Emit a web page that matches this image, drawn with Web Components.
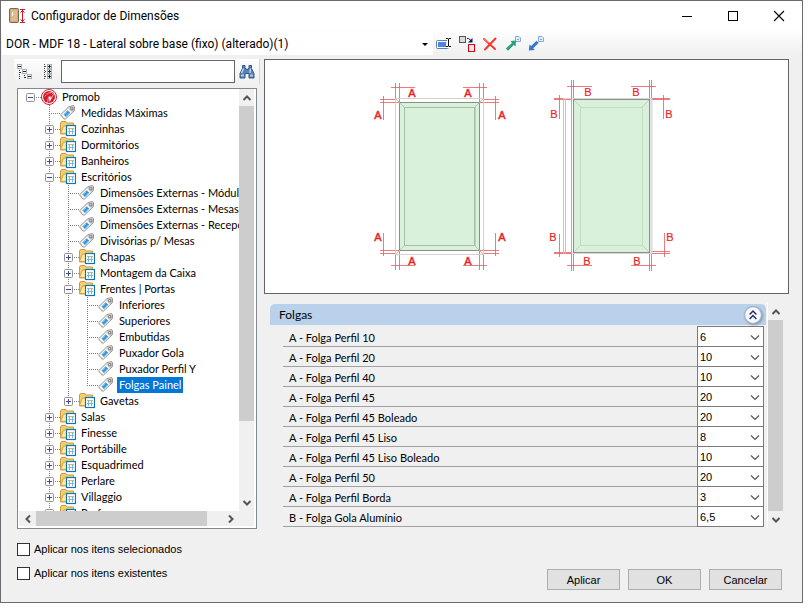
<!DOCTYPE html>
<html lang="pt-BR">
<head>
<meta charset="utf-8">
<title>Configurador de Dimensões</title>
<style>
	html{
		--face: #f0f0f0;
		--frame: #6b6b6f;
		--thumb: #cdcdcd;
		--ui-font: "Liberation Sans", Arial, sans-serif;
		--caption-font: Roboto, "Segoe UI", sans-serif;
		--tree-font: Lato, "Liberation Sans", sans-serif;
	}
	body{
		margin: 0;
		background: #fff;
		color: #000;
		font: 11px/16px var(--ui-font);
	}
</style>
</head>
<body>

<config-dialog caption="Configurador de Dimensões">
	<tool-strip slot="tools" value="DOR - MDF 18 - Lateral sobre base (fixo) (alterado)(1)"></tool-strip>
	<search-strip slot="search"></search-strip>
	<tree-view slot="tree">
		<tree-item label="Promob" icon="promob" state="open" root last>
			<tree-item label="Medidas Máximas" icon="tag"></tree-item>
			<tree-item label="Cozinhas" icon="folder" state="closed"></tree-item>
			<tree-item label="Dormitórios" icon="folder" state="closed"></tree-item>
			<tree-item label="Banheiros" icon="folder" state="closed"></tree-item>
			<tree-item label="Escritórios" icon="folder" state="open">
				<tree-item label="Dimensões Externas - Módulos" icon="tag"></tree-item>
				<tree-item label="Dimensões Externas - Mesas" icon="tag"></tree-item>
				<tree-item label="Dimensões Externas - Recepção" icon="tag"></tree-item>
				<tree-item label="Divisórias p/ Mesas" icon="tag"></tree-item>
				<tree-item label="Chapas" icon="folder" state="closed"></tree-item>
				<tree-item label="Montagem da Caixa" icon="folder" state="closed"></tree-item>
				<tree-item label="Frentes | Portas" icon="folder" state="open">
					<tree-item label="Inferiores" icon="tag"></tree-item>
					<tree-item label="Superiores" icon="tag"></tree-item>
					<tree-item label="Embutidas" icon="tag"></tree-item>
					<tree-item label="Puxador Gola" icon="tag"></tree-item>
					<tree-item label="Puxador Perfil Y" icon="tag"></tree-item>
					<tree-item label="Folgas Painel" icon="tag" selected last></tree-item>
				</tree-item>
				<tree-item label="Gavetas" icon="folder" state="closed" last></tree-item>
			</tree-item>
			<tree-item label="Salas" icon="folder" state="closed"></tree-item>
			<tree-item label="Finesse" icon="folder" state="closed"></tree-item>
			<tree-item label="Portábille" icon="folder" state="closed"></tree-item>
			<tree-item label="Esquadrimed" icon="folder" state="closed"></tree-item>
			<tree-item label="Perlare" icon="folder" state="closed"></tree-item>
			<tree-item label="Villaggio" icon="folder" state="closed"></tree-item>
			<tree-item label="Performa" icon="folder" state="closed"></tree-item>
		</tree-item>
	</tree-view>
	<door-preview slot="detail"></door-preview>
	<value-panel slot="detail" heading="Folgas">
		<value-row label="A - Folga Perfil 10" value="6"></value-row>
		<value-row label="A - Folga Perfil 20" value="10"></value-row>
		<value-row label="A - Folga Perfil 40" value="10"></value-row>
		<value-row label="A - Folga Perfil 45" value="20"></value-row>
		<value-row label="A - Folga Perfil 45 Boleado" value="20"></value-row>
		<value-row label="A - Folga Perfil 45 Liso" value="8"></value-row>
		<value-row label="A - Folga Perfil 45 Liso Boleado" value="10"></value-row>
		<value-row label="A - Folga Perfil 50" value="20"></value-row>
		<value-row label="A - Folga Perfil Borda" value="3"></value-row>
		<value-row label="B - Folga Gola Alumínio" value="6,5"></value-row>
	</value-panel>
	<check-option slot="options">Aplicar nos itens selecionados</check-option>
	<check-option slot="options">Aplicar nos itens existentes</check-option>
	<push-button slot="actions">Aplicar</push-button>
	<push-button slot="actions">OK</push-button>
	<push-button slot="actions">Cancelar</push-button>
</config-dialog>

<script>
const icons = {
	door: `
		<rect x=".5" y=".5" width="9" height="14" rx="1" fill="#cba97a" stroke="#80664a"/>
		<path d="M2 2h6v11H2z" fill="#d9bd93"/><path d="M3.500 4v4" stroke="#fff"/>
		<path d="M11 1.500h5M11 14.500h5M13.500 2v12M11.500 4.500l2-2 2 2M11.500 11.500l2 2 2-2" fill="none" stroke="#d8142c"/>`,
	promob: `
		<circle cx="8" cy="8" r="7.500" fill="#fff" stroke="#d31f2f"/>
		<circle cx="8" cy="8" r="6" fill="#d31f2f"/>
		<path d="M6.500 14l1-6 2-.5 1.500 1 1.500-3-2-2-3 .5-2 1.500-2 2" fill="none" stroke="#f0a0a6"/>
		<path d="M8 8l3 .8-2.500 4.200z" fill="#fff"/>`,
	tag: `
		<path d="M.5 9.800L8.800 1.800 13.500.5l1 1v4L5.500 14h-1.500z" fill="#f6f6f6" stroke="#909090"/>
		<path d="M9.500 2.200l4-1.200.600.600v3.600l-2 2-4-4z" fill="#c6c6c6"/>
		<path d="M3.500 9.500l4.200-4.200 2.500 2.500L6 12z" fill="#2f95dc"/>
		<path d="M4.500 9.500l3-3M6.500 11l3-3" stroke="#8fd0ff" stroke-width=".8"/>
		<rect x="10.800" y="2.800" width="2" height="2" fill="#fff" stroke="#6f6f6f" stroke-width=".8"/>`,
	folder: `
		<path d="M.5 13v-11l1-1.500h4.500l1 1.500h6.500v11z" fill="#f3cf74" stroke="#cf9a3c"/>
		<path d="M.5 12.500l3-7.500h11v7.500z" fill="#ffe9a6" stroke="#d9a23f"/>
		<rect x="6.500" y="4.500" width="9" height="10" fill="#fff" stroke="#0a78b4" stroke-width="1.200"/>
		<path d="M8 7.500h6" stroke="#e6b84c"/>
		<path d="M8 10.500h6M9.500 7v6M12.500 7v6" stroke="#7ab6e8"/>`,
	expandTree: `
		<path d="M2.500 6v9M7.500 11v4" fill="none" stroke="#333" stroke-dasharray="1 1"/>
		<path d="M3 8.500h2M8 13.500h2" fill="none" stroke="#333" stroke-dasharray="1 1"/>
		<g fill="#fff" stroke="#a3adb8"><rect x=".5" y=".5" width="4" height="4"/><rect x="5.500" y="5.500" width="4" height="4"/><rect x="10.500" y="10.500" width="4" height="4"/></g>
		<path d="M1 2.500h3M6 7.500h3M11 12.500h3" stroke="#222"/>`,
	collapseTree: `
		<path d="M5.500 0v16" stroke="#444" stroke-dasharray="1 1"/>
		<g fill="#fff" stroke="#a3adb8"><rect x="8.500" y=".5" width="4" height="4"/><rect x="8.500" y="5.500" width="4" height="4"/><rect x="8.500" y="10.500" width="4" height="4"/></g>
		<path d="M9 2.500h3M10.500 1v3M9 7.500h3M10.500 6v3M9 12.500h3M10.500 11v3" stroke="#222"/>
		<path d="M6 2.500h2M6 7.500h2M6 12.500h2" stroke="#444" stroke-dasharray="1 1"/>`,
	find: `
		<path d="M3.500 1.500h2.500v3h1v1h2v-1h1v-3h2.500v3l2.500 5v4.500h-5V9.500H6v4.500H1V9.500l2.500-5z" fill="#5a83b8" stroke="#34588a"/>
		<path d="M4.500 4.500l-2 4.500M11.500 4.500l-.5 4.500" stroke="#c6dcf4" stroke-width="1.300"/>
		<path d="M2 11.500h3M11 11.500h3" stroke="#a9c6e8" stroke-width="2"/>`,
	rename: `
		<rect x=".5" y="4.500" width="12" height="8" rx="1" fill="#fff" stroke="#5f7fae"/>
		<rect x="2" y="6" width="8" height="5" fill="#4a86e0"/>
		<path d="M10 2.500h5M10 10.500h5M12.500 3v7" stroke="#fff" stroke-width="3"/>
		<path d="M10 2.500h2l.5.500.5-.5h2M10 10.500h2l.5-.5.5.5h2M12.500 3v7" fill="none" stroke="#111"/>`,
	replace: `
		<rect x=".5" y=".5" width="6" height="6" fill="#dcdcdc" stroke="#555"/>
		<rect x="9.500" y="8.500" width="6" height="7" fill="#e8e8e8" stroke="#e0000f"/>
		<path d="M8 2.500h1.500l2.500 2" fill="none" stroke="#0a1a6a"/><path d="M13.500 2v4.500H9z" fill="#0a1a6a"/>`,
	remove: `
		<path d="M2 3l11 10M13.500 2.500L3 13.500" stroke="#f03a30" stroke-width="2" stroke-linecap="round"/>
		<path d="M1.500 2.500l5 4" stroke="#ff8b80"/>`,
	exportGreen: `
		<path d="M10.500.5h3.500l1.500 1.500v3.500h-5z" fill="#e4effb" stroke="#86a9da"/><path d="M12 3.500h2" stroke="#7fa2d8"/>
		<path d="M11 4.500l-5.500.5 1.500 2L.8 12.500l2.200 2.200L8.800 9l1.700 1.500z" fill="#27a17c"/>`,
	importBlue: `
		<path d="M10.500.5h3.500l1.500 1.500v3.500h-5z" fill="#e4effb" stroke="#86a9da"/><path d="M12 3.500h2" stroke="#7fa2d8"/>
		<path d="M.8 14.500l.7-6 1.700 1.500L8.500 4.700l2.200 2.200L5.200 12.200l1.600 1.700z" fill="#3479cd"/>`,
	up: `<path d="M4.500 10L8 6.500l3.500 3.500" fill="none" stroke="#555" stroke-width="2"/>`,
	down: `<path d="M4.500 6L8 9.500l3.500-3.500" fill="none" stroke="#555" stroke-width="2"/>`,
	left: `<path d="M10 4.500L6.500 8l3.500 3.500" fill="none" stroke="#555" stroke-width="2"/>`,
	right: `<path d="M6 4.500L9.500 8 6 11.500" fill="none" stroke="#555" stroke-width="2"/>`,
	chevron: `<path d="M4 6.500l4 4 4-4" fill="none" stroke="#555" stroke-width="1.200"/>`,
	triangle: `<path d="M5 7h6l-3 3z" fill="#000"/>`,
	minimize: `<path d="M3 8.500h10" stroke="#000"/>`,
	maximize: `<rect x="3.500" y="3.500" width="9" height="9" fill="none" stroke="#000"/>`,
	close: `<path d="M3 3l10 10M13 3L3 13" stroke="#000" stroke-width="1.100"/>`,
	collapse: `
		<circle cx="8" cy="8" r="7.500" fill="#f7f8fc" stroke="#a4aec4"/>
		<path d="M5 7.500l3-3 3 3M5 11.500l3-3 3 3" fill="none" stroke="#1c2f6e" stroke-width="1.300"/>`
};

const svg = (name) => `<svg width="16" height="16" viewBox="0 0 16 16" aria-hidden="true">${icons[name]}</svg>`;

class BaseElement extends HTMLElement {
	render(html){
		const template = document.createElement('template');
		template.innerHTML = html;
		this.attachShadow({ mode: 'open'});
		this.shadowRoot.appendChild(template.content.cloneNode(true));
	}
}

class ConfigDialog extends BaseElement {
	constructor(){
		super();
		this.render(`
		<style>
			:host{
				display: flex;
				flex-direction: column;
				box-sizing: border-box;
				height: calc(100vh - 7px);
				margin-right: 9px;
				border: 1px solid var(--frame);
				background: var(--face);
			}
			header{
				display: flex;
				align-items: center;
				height: 30px;
				padding-left: 8px;
				background: #fff;
				font: 12px/16px var(--caption-font);
			}
			h1{
				flex: 1;
				margin: 0 0 0 6px;
				font: inherit;
			}
			header svg{
				display: block;
			}
			header button{
				display: grid;
				place-items: center;
				width: 46px;
				height: 29px;
				padding: 0;
				border: 0;
				background: none;
			}
			main{
				flex: 1;
				display: grid;
				grid-template-columns: 243px 1fr;
				gap: 7px;
				min-height: 0;
				padding: 3px 13px 0;
			}
			.side, .detail{
				display: flex;
				flex-direction: column;
				min-height: 0;
			}
			.side{
				gap: 4px;
			}
			.detail{
				gap: 9px;
			}
			footer{
				display: flex;
				justify-content: space-between;
				padding: 14px 20px 12px 16px;
			}
			.options{
				display: flex;
				flex-direction: column;
				gap: 8px;
			}
			.actions{
				display: flex;
				align-items: flex-end;
				gap: 8px;
				padding-top: 26px;
			}
		</style>
		<header>
			${svg('door')}
			<h1></h1>
			<button aria-label="Minimizar">${svg('minimize')}</button>
			<button aria-label="Maximizar">${svg('maximize')}</button>
			<button aria-label="Fechar">${svg('close')}</button>
		</header>
		<slot name="tools"></slot>
		<main>
			<div class="side"><slot name="search"></slot><slot name="tree"></slot></div>
			<div class="detail"><slot name="detail"></slot></div>
		</main>
		<footer>
			<div class="options"><slot name="options"></slot></div>
			<div class="actions"><slot name="actions"></slot></div>
		</footer>`);
		this.shadowRoot.querySelector('h1').textContent = this.getAttribute('caption');
	}
}

class ToolStrip extends BaseElement {
	constructor(){
		super();
		this.render(`
		<style>
			:host{
				display: flex;
				align-items: center;
				height: 25px;
				padding-left: 1px;
				background: linear-gradient(#fdfdfd, var(--face));
			}
			.combo{
				display: grid;
				grid-template-columns: 1fr 16px;
				align-items: center;
				width: 431px;
				height: 23px;
				background: #fff;
			}
			select{
				grid-area: 1 / 1 / 2 / 3;
				height: 23px;
				padding: 0 0 0 4px;
				border: 0;
				background: none;
				color: #000;
				font: 12px/16px var(--caption-font);
				appearance: none;
			}
			.combo svg{
				grid-area: 1 / 2;
				pointer-events: none;
			}
			svg{
				display: block;
			}
			button{
				width: 23px;
				height: 22px;
				padding: 0 3px;
				border: 0;
				background: none;
			}
		</style>
		<div class="combo">
			<select aria-label="Configuração"><option></option></select>
			${svg('triangle')}
		</div>
		<button aria-label="Renomear">${svg('rename')}</button>
		<button aria-label="Substituir">${svg('replace')}</button>
		<button aria-label="Excluir">${svg('remove')}</button>
		<button aria-label="Exportar">${svg('exportGreen')}</button>
		<button aria-label="Importar">${svg('importBlue')}</button>`);
		this.shadowRoot.querySelector('option').textContent = this.getAttribute('value');
	}
}

class SearchStrip extends BaseElement {
	constructor(){
		super();
		this.render(`
		<style>
			:host{
				display: flex;
				align-items: center;
				height: 25px;
				margin-right: -3px;
				border-right: 1px solid #d4d4d4;
				background: linear-gradient(#fdfdfd, var(--face));
			}
			button{
				width: 22px;
				padding: 0;
				border: 0;
				background: none;
			}
			svg{
				display: block;
				margin: 0 auto;
			}
			input{
				flex: 1;
				min-width: 0;
				box-sizing: border-box;
				height: 23px;
				margin-left: 3px;
				border: 1px solid #646464;
				background: #fff;
				font: inherit;
			}
			button:last-child{
				width: 24px;
			}
		</style>
		<button aria-label="Expandir tudo">${svg('expandTree')}</button>
		<button aria-label="Recolher tudo">${svg('collapseTree')}</button>
		<input type="text" aria-label="Pesquisar">
		<button aria-label="Localizar">${svg('find')}</button>`);
	}
}

class ScrollTrack extends BaseElement {
	constructor(){
		super();
		const across = this.hasAttribute('horizontal');
		this.render(`
		<style>
			:host{
				display: flex;
				flex-direction: ${across ? 'row' : 'column'};
				background: var(--face);
			}
			button{
				flex: none;
				width: ${across ? 17 : 15}px;
				height: ${across ? 15 : 17}px;
				display: grid;
				place-items: center;
				padding: 0;
				border: 0;
				background: none;
			}
			svg{
				display: block;
			}
			.thumb{
				flex: var(--fill, 1);
				background: var(--thumb);
			}
			.rest{
				flex: var(--rest, 0);
			}
		</style>
		<button aria-label="Voltar">${svg(across ? 'left' : 'up')}</button>
		<div class="thumb"></div>
		<div class="rest"></div>
		<button aria-label="Avançar">${svg(across ? 'right' : 'down')}</button>`);
	}
}

class TreeView extends BaseElement {
	constructor(){
		super();
		this.render(`
		<style>
			:host{
				flex: 1;
				display: grid;
				grid-template: 1fr 15px / 1fr 15px;
				min-height: 0;
				box-sizing: border-box;
				margin-left: 3px;
				padding: 0 2px 2px 1px;
				border: 1px solid #828790;
				background: #fff;
				font-family: var(--tree-font);
			}
			.items{
				min-width: 0;
				min-height: 0;
				overflow: hidden;
				padding: 0 0 0 2px;
			}
			.down{
				--fill: 314;
				--rest: 73;
			}
			.across{
				--fill: 170;
				--rest: 15;
			}
			.corner{
				background: var(--face);
			}
		</style>
		<div class="items" role="tree"><slot></slot></div>
		<scroll-track class="down"></scroll-track>
		<scroll-track class="across" horizontal></scroll-track>
		<div class="corner"></div>`);
	}
}

class TreeItem extends BaseElement {
	constructor(){
		super();
		const state = this.getAttribute('state');
		this.render(`
		<style>
			:host{
				display: block;
				background: repeating-linear-gradient(#808080 0 1px, transparent 1px 2px) 9px 0 / 1px 100% no-repeat;
			}
			:host([last]){
				background-size: 1px 8px;
			}
			:host([root]){
				background: none;
			}
			.row{
				display: flex;
				align-items: center;
				height: 16px;
				padding-left: 5px;
				background: repeating-linear-gradient(90deg, #808080 0 1px, transparent 1px 2px) 9px 8px / 12px 1px no-repeat;
				white-space: nowrap;
			}
			.box{
				flex: none;
				width: 9px;
				height: 9px;
				margin-right: 6px;
			}
			svg{
				display: block;
				flex: none;
			}
			.label{
				margin-left: 3px;
				padding: 0 2px;
			}
			:host([selected]) .label{
				background: #0078d7;
				color: #fff;
			}
			.children{
				margin-left: 19px;
			}
		</style>
		<div class="row">
			<svg class="box" viewBox="0 0 9 9" aria-hidden="true">${state ? `
				<rect x=".5" y=".5" width="8" height="8" rx="1" fill="#fafafa" stroke="#919191"/>
				<path d="M2 4.500h5${state === 'closed' ? 'M4.500 2v5' : ''}" stroke="#3a4f96"/>` : ''}
			</svg>
			${svg(this.getAttribute('icon'))}
			<span class="label"></span>
		</div>
		<div class="children"><slot></slot></div>`);
		this.shadowRoot.querySelector('.label').textContent = this.getAttribute('label');
	}
}

// corner marks of the two doors, in drawing units
const marksA = 'M395.500 83v15M399.500 83v19M391 87.500h24M479.500 83v19M483.500 83v15M463 87.500h24'
	+ 'M380 99.500h16M380 102.500h19M383.500 96v24M484 99.500h15M480 102.500h19M495.500 96v24'
	+ 'M380 250.500h19M380 253.500h16M383.500 233v23M480 250.500h19M484 253.500h15M495.500 233v23'
	+ 'M395.500 255v15M399.500 251v19M391 265.500h24M479.500 251v19M483.500 255v15M463 265.500h24';
const marksB = 'M571.500 80v18M573.500 80v18M567 86.500h25M649.500 80v18M651.500 80v18M631 86.500h25'
	+ 'M554 98.500h18M554 99.500h18M559.500 95v24M651 98.500h19M651 99.500h19M663.500 95v24'
	+ 'M554 252.500h18M554 253.500h18M559.500 234v23M651 251.500h19M651 253.500h19M664.500 233v24'
	+ 'M571.500 253v18M573.500 253v18M567 265.500h25M649.500 253v18M651.500 253v18M631 265.500h25';
const lettersA = [[412, 97], [468, 97], [378, 119], [502, 119], [378, 241], [502, 241], [412, 265], [468, 265]];
const lettersB = [[588, 96], [636, 96], [554, 118], [669, 118], [553, 241], [670, 241], [587, 265], [637, 265]];
const letters = (char, spots) => spots.map(([x, y]) => `<text x="${x}" y="${y}">${char}</text>`).join('');

class DoorPreview extends BaseElement {
	constructor(){
		super();
		this.render(`
		<style>
			:host{
				flex: 1;
				display: grid;
				place-items: center;
				min-height: 0;
				border: 1px solid #646464;
				background: #fff;
			}
			svg{
				display: block;
			}
			text{
				fill: #e8262a;
				font: 11px "Liberation Sans", Arial, sans-serif;
				text-anchor: middle;
				stroke: #e8262a;
				stroke-width: .2;
			}
			.a text{
				stroke-width: .5;
			}
		</style>
		<svg width="321" height="209" viewBox="366 72 321 209" role="img" aria-label="Folgas das portas">
			<g fill="none">
				<path d="${marksA}${marksB}" stroke="#e85a5a" stroke-opacity=".8"/>
				<rect x="395.500" y="98.500" width="88" height="156" stroke="#d2d2d2"/>
				<rect x="399.500" y="102.500" width="80" height="148" fill="#d9f0da" stroke="#8a8f8a"/>
				<path d="M395.500 98.500l9 9M483.500 98.500l-9 9M395.500 254.500l9-9M483.500 254.500l-9-9" stroke="#b4c4b5"/>
				<rect x="404.500" y="107.500" width="70" height="138" stroke="#a5bfa7"/>
				<path d="M475.500 107v139" stroke="#bcd6be"/>
				<path d="M563.500 98v156M565.500 98v156" stroke="#c4c4c4"/>
				<path d="M563 98.500h89v155h-81" stroke="#d8d8d8"/>
				<path d="M571.500 98v156" stroke="#b0b0b0"/>
				<rect x="573.500" y="99.500" width="76" height="153" fill="#d9f0da" stroke="#8a8f8a"/>
				<path d="M651 98v156" stroke="#ccc"/>
				<path d="M574 100l7 7M649 100l-7 7M574 252l7-7M649 252l-7-7" stroke="#bcd2be"/>
				<rect x="580.500" y="107.500" width="62" height="138" stroke="#c3dbc5"/>
			</g>
			<g class="a">${letters('A', lettersA)}</g>
			${letters('B', lettersB)}
		</svg>`);
	}
}

class ValuePanel extends BaseElement {
	constructor(){
		super();
		this.render(`
		<style>
			:host{
				display: flex;
				gap: 2px;
				padding: 0 6px 1px;
			}
			section{
				flex: 1;
				padding: 1px 0;
			}
			header{
				display: flex;
				align-items: center;
				justify-content: space-between;
				height: 21px;
				padding: 0 4px 0 9px;
				border-radius: 5px 5px 0 0;
				background: #b9d1ea;
			}
			h2{
				margin: 0;
				font: 12px/16px var(--tree-font);
			}
			button{
				padding: 0;
				border: 0;
				background: none;
			}
			header svg{
				display: block;
				width: 18px;
				height: 18px;
				filter: drop-shadow(1px 1px 1px #7f8fae);
			}
			.rows{
				margin: 1px 2px 0 13px;
				border-top: 1px solid transparent;
			}
			scroll-track{
				border-left: 1px solid #fff;
				margin-left: -1px;
			}
		</style>
		<section>
			<header><h2></h2><button aria-label="Recolher">${svg('collapse')}</button></header>
			<div class="rows"><slot></slot></div>
		</section>
		<scroll-track></scroll-track>`);
		this.shadowRoot.querySelector('h2').textContent = this.getAttribute('heading');
	}
}

class ValueRow extends BaseElement {
	constructor(){
		super();
		this.render(`
		<style>
			:host{
				display: grid;
				grid-template-columns: 1fr 67px;
				align-items: stretch;
				height: 20px;
			}
			label{
				padding: 2px 0 0 6px;
				border-bottom: 1px solid #a0a0a0;
				font-family: var(--tree-font);
				line-height: 17px;
			}
			.combo{
				display: grid;
				grid-template-columns: 1fr 16px;
				align-items: center;
				margin-top: -1px;
				border: 1px solid #7a7a7a;
				background: #fff;
			}
			select{
				grid-area: 1 / 1 / 2 / 3;
				width: 100%;
				height: 19px;
				padding: 0 0 0 2px;
				border: 0;
				background: none;
				color: #000;
				font: 11px/16px var(--ui-font);
				appearance: none;
			}
			svg{
				grid-area: 1 / 2;
				display: block;
				pointer-events: none;
			}
		</style>
		<label for="value"></label>
		<div class="combo">
			<select id="value"><option></option></select>
			${svg('chevron')}
		</div>`);
		this.shadowRoot.querySelector('label').textContent = this.getAttribute('label');
		this.shadowRoot.querySelector('option').textContent = this.getAttribute('value');
	}
}

class CheckOption extends BaseElement {
	constructor(){
		super();
		this.render(`
		<style>
			:host{
				display: block;
				height: 16px;
			}
			label{
				display: flex;
				gap: 4px;
				line-height: 13px;
			}
			input{
				width: 13px;
				height: 13px;
				margin: 0;
				border: 1px solid #333;
				background: #fff;
				appearance: none;
			}
		</style>
		<label><input type="checkbox"><span><slot></slot></span></label>`);
	}
}

class PushButton extends BaseElement {
	constructor(){
		super();
		this.render(`
		<style>
			:host{
				display: block;
			}
			button{
				display: block;
				width: 73px;
				height: 21px;
				padding: 0;
				border: 1px solid #adadad;
				background: #e1e1e1;
				color: #000;
				font: 11px/16px var(--ui-font);
			}
		</style>
		<button><slot></slot></button>`);
	}
}

window.customElements.define('scroll-track', ScrollTrack);
window.customElements.define('tool-strip', ToolStrip);
window.customElements.define('search-strip', SearchStrip);
window.customElements.define('tree-item', TreeItem);
window.customElements.define('tree-view', TreeView);
window.customElements.define('door-preview', DoorPreview);
window.customElements.define('value-row', ValueRow);
window.customElements.define('value-panel', ValuePanel);
window.customElements.define('check-option', CheckOption);
window.customElements.define('push-button', PushButton);
window.customElements.define('config-dialog', ConfigDialog);
</script>
</body>
</html>
